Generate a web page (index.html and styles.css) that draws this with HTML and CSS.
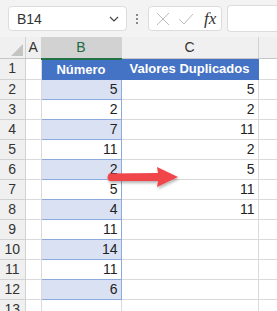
FILE: index.html
```html
<!DOCTYPE html>
<html lang="es">
<head>
    <meta charset="UTF-8">
    <title>Valores Duplicados</title>
    <link rel="stylesheet" href="styles.css">
</head>
<body>
    <div class="toolbar">
        <div class="name-box">
            <span>B14</span>
            <svg class="chevron" width="10" height="6" viewBox="0 0 10 6"><path d="M1 1 L5 5 L9 1" fill="none" stroke="#444" stroke-width="1.2"/></svg>
        </div>
        <div class="dots"><i></i><i></i><i></i></div>
        <div class="fx-box">
            <svg width="14" height="14" viewBox="0 0 14 14"><path d="M1 1 L13 13 M13 1 L1 13" stroke="#bdbdbd" stroke-width="1"/></svg>
            <svg width="16" height="12" viewBox="0 0 16 12"><path d="M1 6 L6 11 L15 1" fill="none" stroke="#bdbdbd" stroke-width="1"/></svg>
            <span class="fx">fx</span>
        </div>
        <div class="formula"></div>
    </div>

    <div class="sheet">
        <table class="grid">
            <colgroup>
                <col class="c-rh"><col class="c-a"><col class="c-b"><col class="c-c"><col class="c-d">
            </colgroup>
            <tr class="head">
                <th class="corner"><svg width="12" height="12" viewBox="0 0 12 12"><path d="M12 0 L12 12 L0 12 Z" fill="#c4c4c4"/></svg></th>
                <th>A</th>
                <th class="sel">B</th>
                <th>C</th>
                <th></th>
            </tr>
            <tr>
                <th>1</th><td></td>
                <td class="tbl-head">Número</td>
                <td class="tbl-head">Valores Duplicados</td><td></td>
            </tr>
            <tr><th>2</th><td></td><td class="b band">5</td><td class="num">5</td><td></td></tr>
            <tr><th>3</th><td></td><td class="b">2</td><td class="num">2</td><td></td></tr>
            <tr><th>4</th><td></td><td class="b band">7</td><td class="num">11</td><td></td></tr>
            <tr><th>5</th><td></td><td class="b">11</td><td class="num">2</td><td></td></tr>
            <tr><th>6</th><td></td><td class="b band">2</td><td class="num">5</td><td></td></tr>
            <tr><th>7</th><td></td><td class="b">5</td><td class="num">11</td><td></td></tr>
            <tr><th>8</th><td></td><td class="b band">4</td><td class="num">11</td><td></td></tr>
            <tr><th>9</th><td></td><td class="b">11</td><td></td><td></td></tr>
            <tr><th>10</th><td></td><td class="b band">14</td><td></td><td></td></tr>
            <tr><th>11</th><td></td><td class="b">11</td><td></td><td></td></tr>
            <tr><th>12</th><td></td><td class="b band">6</td><td></td><td></td></tr>
            <tr><th>13</th><td></td><td></td><td></td><td></td></tr>
        </table>

        <svg class="arrow" width="82" height="30" viewBox="0 0 82 30">
            <defs>
                <filter id="sh" x="-20%" y="-40%" width="140%" height="180%">
                    <feDropShadow dx="1" dy="2" stdDeviation="1.5" flood-color="#000" flood-opacity="0.3"/>
                </filter>
            </defs>
            <path d="M5 7.5 L54 7 L53 1 L74 11 L53 21 L54 15 L5 15 Q2 11.5 5 7.5 Z" fill="#f0454a" filter="url(#sh)"/>
        </svg>
    </div>
</body>
</html>
```

FILE: styles.css
```css
body {
    margin: 0;
    background-color: #f3f3f3;
    font-family: "Liberation Sans", Arial, sans-serif;
    color: #222;
    overflow: hidden;
}

.toolbar {
    display: flex;
    align-items: center;
    height: 37px;
    padding-left: 8px;
    box-sizing: border-box;
}

.name-box {
    display: flex;
    align-items: center;
    justify-content: space-between;
    width: 119px;
    height: 25px;
    box-sizing: border-box;
    padding: 0 7px 0 8px;
    background-color: #fff;
    border: 1px solid #dcdcdc;
    border-radius: 4px;
    font-size: 14px;
    color: #333;
}

.dots {
    display: flex;
    flex-direction: column;
    gap: 2px;
    margin: 0 10px 0 9px;
}

.dots i {
    width: 2px;
    height: 2px;
    background-color: #888;
}

.fx-box {
    display: flex;
    align-items: center;
    gap: 8px;
    width: 74px;
    height: 25px;
    box-sizing: border-box;
    padding: 0 4px 0 7px;
    background-color: #fff;
    border: 1px solid #dcdcdc;
    border-radius: 4px;
}

.fx {
    font-family: "Liberation Serif", serif;
    font-style: italic;
    font-size: 17px;
    color: #333;
    margin-left: 2px;
}

.formula {
    flex: 1;
    height: 25px;
    margin-left: 5px;
    background-color: #fff;
    border: 1px solid #dcdcdc;
    border-right: none;
    border-radius: 4px 0 0 4px;
}

.sheet {
    position: relative;
    background-color: #fff;
}

.grid {
    border-collapse: collapse;
    table-layout: fixed;
    width: 300px;
    font-size: 14px;
}

.c-rh { width: 25px; }
.c-a { width: 16px; }
.c-b { width: 80px; }
.c-c { width: 137px; }
.c-d { width: 42px; }

.grid th,
.grid td {
    height: 19px;
    padding: 0 3px;
    border: 1px solid #dadada;
    border-top: none;
    border-left: none;
    white-space: nowrap;
    overflow: hidden;
    line-height: 19px;
}

.grid th {
    background-color: #f0f0f0;
    font-weight: normal;
    color: #333;
    text-align: center;
    border-color: #d2d2d2;
}

.grid .head th {
    border-bottom-color: #c6c6c6;
}

.grid th.corner {
    text-align: right;
    vertical-align: bottom;
    padding: 0 2px 2px 0;
    line-height: 0;
}

.grid th.sel {
    background-color: #d2d2d2;
    color: #1e6b41;
    border-bottom: 2px solid #217346;
}

.tbl-head {
    background-color: #4472c4;
    color: #fff;
    font-weight: bold;
    font-size: 13px;
    text-align: center;
    border-color: #4472c4 !important;
}

.b {
    text-align: right;
    border-left: 1px solid #8ea9db !important;
    border-right: 1px solid #8ea9db !important;
    border-bottom: 1px solid #8ea9db !important;
}

.band {
    background-color: #d9e1f2;
}

.num {
    text-align: right;
}

.arrow {
    position: absolute;
    left: 104px;
    top: 129px;
}
```
